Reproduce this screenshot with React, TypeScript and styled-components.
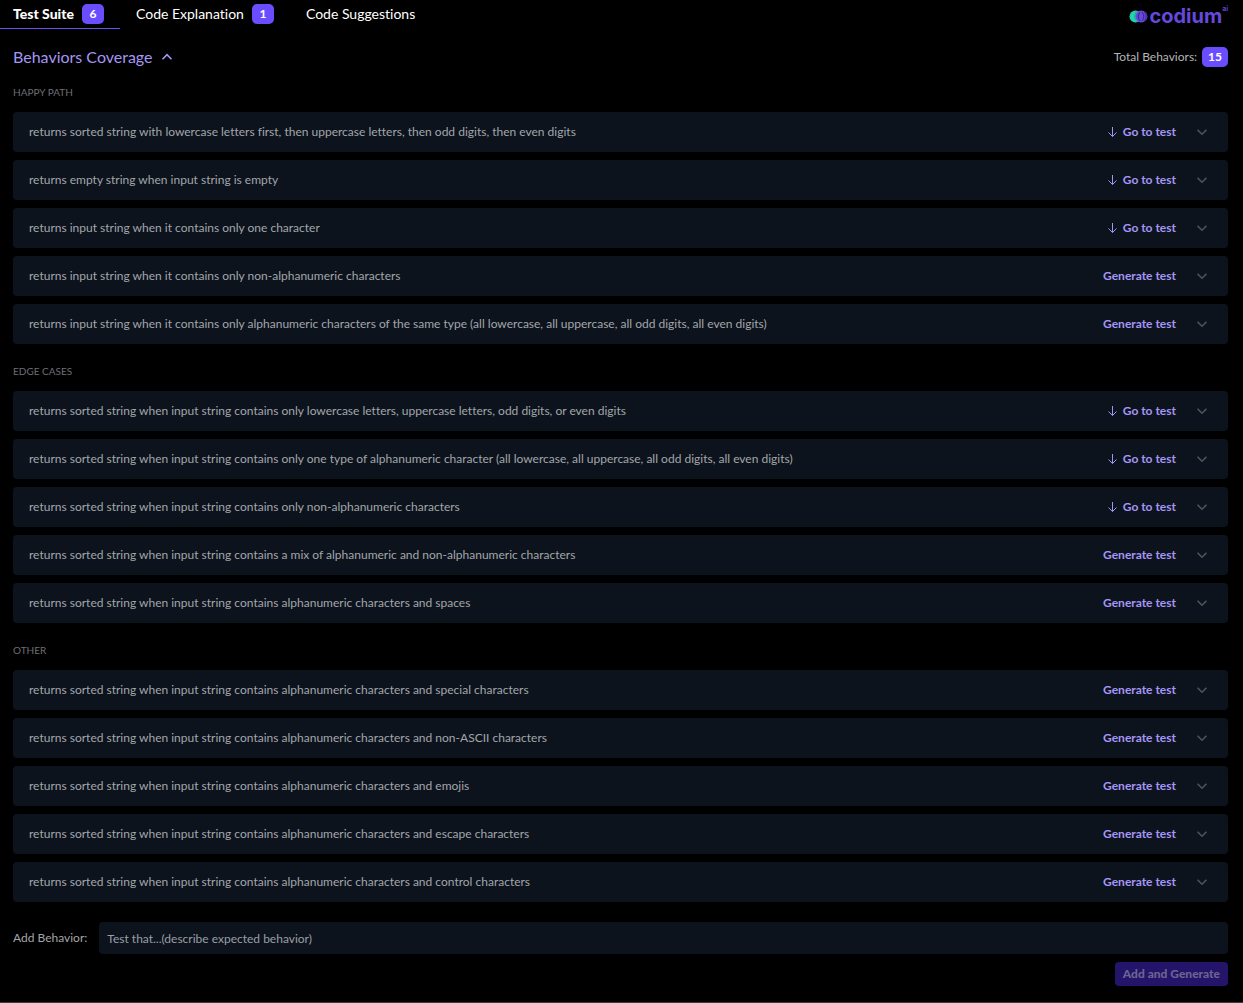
import React, { useState } from "react";
import styled, { createGlobalStyle } from "styled-components";

const GlobalStyle = createGlobalStyle`
  * { box-sizing: border-box; }
  body {
    margin: 0;
    background: #000;
    color: #a3a6aa;
    font: 12px/16px Lato, "Open Sans", sans-serif;
    font-variant-ligatures: none;
  }
  button, input { font: inherit; font-variant-ligatures: none; }
  button { border: 0; padding: 0; background: none; cursor: pointer; }
`;

const Page = styled.div`
  border-bottom: 1px solid #3c3d42;
  padding-bottom: 16px;
`;

const TopBar = styled.header`
  display: flex;
  justify-content: space-between;
  align-items: flex-start;
  height: 29px;
  padding-right: 15px;
`;

const Tabs = styled.nav`
  display: flex;
`;

const Tab = styled.button<{ $active?: boolean; $first?: boolean }>`
  display: flex;
  align-items: center;
  gap: 8px;
  height: 29px;
  padding: 0 16px 0 ${(p) => (p.$first ? 13 : 16)}px;
  border-bottom: 1px solid ${(p) => (p.$active ? "#6a50f0" : "transparent")};
  color: #fff;
  font-size: 14px;
  font-weight: ${(p) => (p.$active ? 900 : 400)};
`;

const Badge = styled.span`
  min-width: 22px;
  padding: 0 6px;
  border-radius: 5px;
  background: #6a4dff;
  color: #fff;
  font-size: 12px;
  line-height: 20px;
  font-weight: 700;
  text-align: center;
`;

const Logo = styled.div`
  display: flex;
  align-items: center;
  height: 32px;
  color: #6549dc;
`;

const LogoText = styled.span`
  margin-left: 1px;
  font: 700 20px/32px Inter, sans-serif;
`;

const LogoSuffix = styled.sup`
  align-self: flex-start;
  padding-top: 4px;
  font: 600 7px/10px Inter, sans-serif;
`;

const Content = styled.main`
  padding: 18px 15px 0 13px;
`;

const Heading = styled.div`
  display: flex;
  justify-content: space-between;
  align-items: center;
  height: 20px;
`;

const Title = styled.h1`
  margin: 0;
  font-size: 16px;
  line-height: 20px;
  font-weight: 400;
`;

const TitleToggle = styled.button`
  display: flex;
  align-items: center;
  gap: 8px;
  color: #a596f5;
`;

const Total = styled.div`
  display: flex;
  align-items: center;
  gap: 5px;
  color: #b4b6b8;
`;

const SectionTitle = styled.h2`
  margin: 20px 0 12px;
  font-size: 10px;
  line-height: 15px;
  font-weight: 400;
  text-transform: uppercase;
  color: #6d6f73;

  ${Heading} + section > & { margin-top: 18px; }
`;

const Rows = styled.ul`
  display: flex;
  flex-direction: column;
  gap: 8px;
  margin: 0;
  padding: 0;
  list-style: none;
`;

const Row = styled.li`
  display: flex;
  align-items: center;
  min-height: 40px;
  padding: 0 20px 0 16px;
  border-radius: 4px;
  background: #0c131d;
`;

const RowText = styled.span`
  flex: 1;
`;

const RowAction = styled.button`
  display: flex;
  align-items: center;
  gap: 5px;
  margin-right: 20px;
  color: #a596f5;
  font-weight: 700;
`;

const Expand = styled.button`
  display: flex;
  color: #50535f;
`;

const AddForm = styled.form`
  display: flex;
  flex-direction: column;
  align-items: flex-end;
  gap: 8px;
  margin-top: 20px;
`;

const Field = styled.div`
  display: flex;
  align-items: center;
  gap: 12px;
  width: 100%;
`;

const Input = styled.input`
  flex: 1;
  height: 32px;
  padding: 0 8px;
  border: 0;
  border-radius: 4px;
  background: #0c131d;
  color: #a3a6aa;
  &::placeholder { color: #9b9fa4; opacity: 1; }
`;

const Submit = styled.button`
  height: 24px;
  padding: 0 8px;
  border-radius: 4px;
  background: #24146a;
  color: #6b6490;
  font-weight: 900;
`;

const Chevron = ({ up }: { up?: boolean }) => (
  <svg width="12" height="12" viewBox="0 0 12 12" fill="none" stroke="currentColor" strokeWidth="1.6" aria-hidden="true">
    <path d={up ? "M1.5 8.2 6 3.7l4.5 4.5" : "M1.5 3.7 6 8.2l4.5-4.5"} />
  </svg>
);

const ArrowDown = () => (
  <svg width="10" height="12" viewBox="0 0 10 12" fill="none" stroke="currentColor" aria-hidden="true">
    <path d="M4.5 1v9.5M.5 6.5l4 4 4-4" />
  </svg>
);

const LogoMark = () => (
  <svg width="19" height="13" viewBox="0 0 19 13" aria-hidden="true">
    <circle cx="6.5" cy="6.5" r="6" fill="#23d3a4" />
    <ellipse cx="12" cy="6.5" rx="6.5" ry="6" fill="#6549dc" />
    <path d="M8.2 1.8a6 6 0 0 0 0 9.4" fill="none" stroke="#2aa5c0" strokeWidth="1.4" />
    <path d="M11 2.2a7 7 0 0 0 0 8.6M13.2 2.2a7 7 0 0 1 0 8.6M15.6 2.2a7 7 0 0 1 0 8.6" fill="none" stroke="#2a1f78" strokeWidth=".9" />
  </svg>
);

type Behavior = { text: string; ready?: boolean };

const SORTED = "returns sorted string when input string contains";

const sections: { title: string; items: Behavior[] }[] = [
  {
    title: "Happy path",
    items: [
      { text: "returns sorted string with lowercase letters first, then uppercase letters, then odd digits, then even digits", ready: true },
      { text: "returns empty string when input string is empty", ready: true },
      { text: "returns input string when it contains only one character", ready: true },
      { text: "returns input string when it contains only non-alphanumeric characters" },
      { text: "returns input string when it contains only alphanumeric characters of the same type (all lowercase, all uppercase, all odd digits, all even digits)" },
    ],
  },
  {
    title: "Edge cases",
    items: [
      { text: `${SORTED} only lowercase letters, uppercase letters, odd digits, or even digits`, ready: true },
      { text: `${SORTED} only one type of alphanumeric character (all lowercase, all uppercase, all odd digits, all even digits)`, ready: true },
      { text: `${SORTED} only non-alphanumeric characters`, ready: true },
      { text: `${SORTED} a mix of alphanumeric and non-alphanumeric characters` },
      { text: `${SORTED} alphanumeric characters and spaces` },
    ],
  },
  {
    title: "Other",
    items: [
      { text: `${SORTED} alphanumeric characters and special characters` },
      { text: `${SORTED} alphanumeric characters and non-ASCII characters` },
      { text: `${SORTED} alphanumeric characters and emojis` },
      { text: `${SORTED} alphanumeric characters and escape characters` },
      { text: `${SORTED} alphanumeric characters and control characters` },
    ],
  },
];

export default function App() {
  const [open, setOpen] = useState(true);

  return (
    <Page>
      <GlobalStyle />
      <TopBar>
        <Tabs>
          <Tab $active $first>Test Suite <Badge>6</Badge></Tab>
          <Tab>Code Explanation <Badge>1</Badge></Tab>
          <Tab>Code Suggestions</Tab>
        </Tabs>
        <Logo>
          <LogoMark />
          <LogoText>codium</LogoText>
          <LogoSuffix>ai</LogoSuffix>
        </Logo>
      </TopBar>
      <Content>
        <Heading>
          <Title>
            <TitleToggle aria-expanded={open} onClick={() => setOpen(!open)}>
              Behaviors Coverage <Chevron up={open} />
            </TitleToggle>
          </Title>
          <Total>Total Behaviors: <Badge>15</Badge></Total>
        </Heading>
        {open && sections.map((section) => (
          <section key={section.title}>
            <SectionTitle>{section.title}</SectionTitle>
            <Rows>
              {section.items.map((item) => (
                <Row key={item.text}>
                  <RowText>{item.text}</RowText>
                  <RowAction>
                    {item.ready && <ArrowDown />}
                    {item.ready ? "Go to test" : "Generate test"}
                  </RowAction>
                  <Expand aria-label="Show details"><Chevron /></Expand>
                </Row>
              ))}
            </Rows>
          </section>
        ))}
        <AddForm onSubmit={(e) => e.preventDefault()}>
          <Field>
            <label htmlFor="behavior">Add Behavior:</label>
            <Input id="behavior" placeholder="Test that...(describe expected behavior)" />
          </Field>
          <Submit type="submit" disabled>Add and Generate</Submit>
        </AddForm>
      </Content>
    </Page>
  );
}
